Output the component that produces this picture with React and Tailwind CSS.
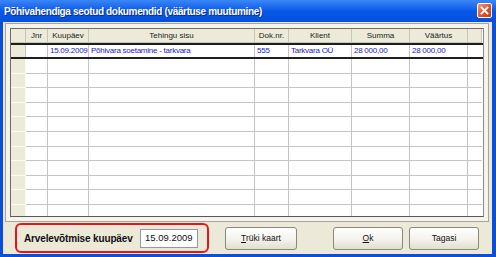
import React from "react";

const cols = [15, 22, 41, 166, 34, 63, 58, 58, 14];
const headers = ["", "Jnr", "Kuupäev", "Tehingu sisu", "Dok.nr.", "Klient", "Summa", "Väärtus", ""];
const data = ["", "", "15.09.2009", "Põhivara soetamine - tarkvara", "555", "Tarkvara OÜ", "28 000,00", "28 000,00", ""];

function Row({ height, cells, kind }) {
  return (
    <div className="flex shrink-0" style={{ height }}>
      {cols.map((w, i) => {
        const isInd = i === 0;
        let cls = "shrink-0 overflow-hidden whitespace-nowrap ";
        if (kind === "header") {
          cls += "bg-[#ecead9] border-r border-b border-[#c8c5b5] text-center text-[#222] leading-[13px]";
        } else if (kind === "data") {
          cls += (isInd ? "bg-[#ecead9] " : "bg-white ") + "border-r border-[#c4c4c4] text-[#1a22c8] pl-[2px] leading-[12px] tracking-[-0.25px]";
        } else {
          cls += (isInd ? "bg-[#ecead9] border-[#fbfbf6] " : "bg-white border-[#c4c4c4] ") + "border-r border-b";
        }
        if (i === cols.length - 1 && kind !== "header") cls += " border-r-0";
        return (
          <div key={i} className={cls} style={{ width: w }}>
            {cells ? cells[i] : ""}
          </div>
        );
      })}
    </div>
  );
}

function XPButton({ children, w, ml }) {
  return (
    <div
      className="h-[23px] flex items-center justify-center rounded-[3px] border border-[#8a8878] bg-gradient-to-b from-[#ffffff] via-[#f5f4ee] to-[#e2dfd0] text-[8.5px] text-[#111] shrink-0"
      style={{ width: w, marginLeft: ml }}
    >
      {children}
    </div>
  );
}

export default function App() {
  const emptyRows = Array.from({ length: 11 });
  return (
    <div
      className="w-[496px] h-[257px] flex flex-col bg-[#0a4fdc] overflow-hidden"
      style={{ fontFamily: '"Liberation Sans", Arial, sans-serif' }}
    >
      {/* Title bar */}
      <div className="h-[22px] shrink-0 flex items-center pl-[4px] pr-[4px] bg-gradient-to-b from-[#3a86f8] via-[#0758e8] to-[#0550dd]">
        <div className="flex-1 text-white font-bold text-[10px] tracking-[-0.35px] whitespace-nowrap [text-shadow:1px_1px_0_#0a2c8c]">
          Põhivahendiga seotud dokumendid (väärtuse muutumine)
        </div>
        <div className="w-[15px] h-[15px] rounded-[2px] border border-white bg-gradient-to-br from-[#f39a74] via-[#e2542c] to-[#c83a14] flex items-center justify-center mb-[1px]">
          <svg width="9" height="9" viewBox="0 0 9 9">
            <path d="M1.5 1.5 L7.5 7.5 M7.5 1.5 L1.5 7.5" stroke="white" strokeWidth="1.8" strokeLinecap="square" />
          </svg>
        </div>
      </div>

      {/* Body */}
      <div className="flex-1 flex flex-col ml-[3px] mr-[4px] mb-[3px] bg-[#ece9d8]">
        {/* Panel */}
        <div className="mt-[1px] ml-[2px] mr-[3px] h-[199px] border border-[#a7a594] bg-[#f4f3ee] p-[4px] shrink-0">
          <div className="h-full border border-t-[#6f6d62] border-l-[#6f6d62] border-b-[#5a5a52] border-r-[#8f8d80] bg-white flex flex-col overflow-hidden text-[8px]">
            <Row height={14} cells={headers} kind="header" />
            <div className="h-[2px] bg-[#1e1e1e] shrink-0" />
            <Row height={12} cells={data} kind="data" />
            <div className="h-[2px] bg-[#1e1e1e] shrink-0" />
            {emptyRows.map((_, i) => (
              <Row key={i} height={14.6} kind="empty" />
            ))}
          </div>
        </div>

        {/* Bottom bar */}
        <div className="flex items-center flex-1">
          <div className="ml-[12px] w-[194px] h-[30px] border-2 border-[#e8141c] rounded-[6px] flex items-center pl-[7px] shrink-0">
            <span className="font-bold text-[10px] tracking-[-0.15px] text-[#111] whitespace-nowrap">Arvelevõtmise kuupäev</span>
            <div className="ml-auto mr-[9px] w-[58px] h-[19px] border border-[#8e9aa6] bg-white text-[9.5px] text-[#111] flex items-center pl-[4px]">
              15.09.2009
            </div>
          </div>
          <XPButton w={72} ml={16}>
            <span><span className="underline">T</span>rüki kaart</span>
          </XPButton>
          <XPButton w={70} ml={36}>
            <span><span className="underline">O</span>k</span>
          </XPButton>
          <XPButton w={70} ml={6}>
            <span>Tagasi</span>
          </XPButton>
        </div>
      </div>
    </div>
  );
}
